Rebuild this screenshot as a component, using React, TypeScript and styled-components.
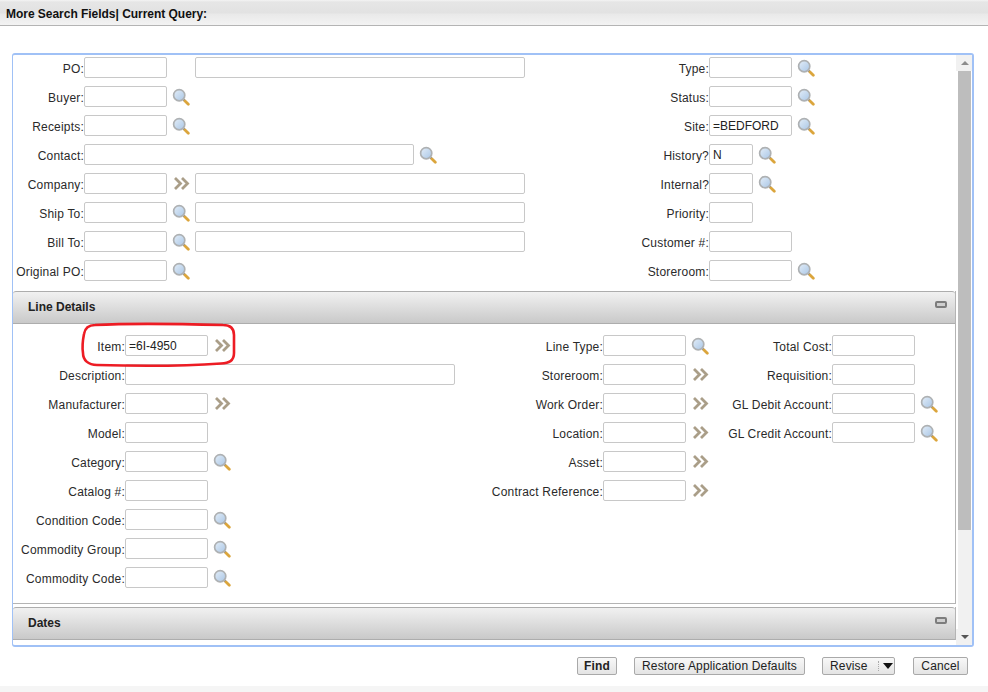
import React, { useId } from "react";
import styled, { createGlobalStyle } from "styled-components";

const Global = createGlobalStyle`
  html, body { margin: 0; padding: 0; background: #fff; }
  body { font-family: "Liberation Sans", Arial, sans-serif; font-size: 12px; color: #222; overflow: hidden; }
`;

const Page = styled.div`
  width: 988px; height: 692px; display: flex; flex-direction: column; background: #fff; overflow: hidden;
`;
const TitleBar = styled.div`
  height: 26px; flex: none; box-sizing: border-box; padding: 8px 0 0 6px;
  border-bottom: 1px solid #b4b4b4;
  background: linear-gradient(#f4f4f4 0, #e6e6e6 2px, #e2e2e2 13px, #e9e9e9 14px, #f3f3f3 25px);
  font-size: 12px; font-weight: bold; color: #111; line-height: 12px; white-space: pre; letter-spacing: -0.03px;
`;
const Frame = styled.div`
  margin: 27px 0 0 12px; width: 962px; height: 594px; flex: none; box-sizing: border-box;
  border: 1px solid #a0c1f6; border-width: 2px 2px 2px 1px; border-radius: 3px;
  display: flex; overflow: hidden;
`;
const Scroller = styled.div`
  width: 943px; flex: none; overflow: hidden; box-sizing: border-box;
`;
const TopFields = styled.div`
  display: grid; grid-template-columns: 607px 1fr; padding-top: 2px;
`;
const Col = styled.div`
  display: flex; flex-direction: column; gap: 8px;
`;
const Row = styled.div`
  display: flex; align-items: flex-start; height: 21px;
`;
const Label = styled.label<{ $w: number }>`
  width: ${(p) => p.$w}px; flex: none; box-sizing: border-box; padding: 2px 0 0 0; text-align: right;
  font-size: 12px; color: #2a2a2a; white-space: nowrap; line-height: 21px; letter-spacing: 0.2px;
  height: 21px;
`;
const Input = styled.div<{ $w: number }>`
  width: ${(p) => p.$w}px; height: 21px; flex: none; box-sizing: border-box;
  border: 1px solid #c8c8c8; border-radius: 2px; background: #fff;
  padding-left: 3px; font-size: 12px; line-height: 20px; color: #222;
`;
const Slot = styled.span<{ $w?: number }>`
  flex: none; width: ${(p) => p.$w ?? 28}px; box-sizing: border-box; padding-left: 5px; height: 21px;
  display: flex; align-items: center;
`;
const Section = styled.section`
  position: relative; box-sizing: border-box; border-right: 1px solid #b4b4b4;
`;
const SectionHeader = styled.header`
  height: 33px; box-sizing: border-box; display: flex; align-items: center; justify-content: space-between;
  padding: 0 8px 2px 15px; border: solid #adadad; border-width: 1px 0 1px 0; border-top-right-radius: 3px; border-top-left-radius: 3px;
  background: linear-gradient(#f1f1f1, #c9c9c9);
  font-weight: bold; font-size: 12px; color: #222;
`;
const Collapse = styled.span`
  width: 12px; height: 7px; box-sizing: border-box; border: 2px solid #7d7d7d; border-radius: 2px; background: #cfcfcf;
  margin-bottom: 5px;
`;
const LineBody = styled.div`
  position: relative; display: grid; grid-template-columns: 447px 255px 1fr;
  padding: 11px 0 15px; border-bottom: 1px solid #b4b4b4;
`;
const Callout = styled.svg`
  position: absolute; left: 68px; top: -1px; overflow: visible;
`;
const DatesSection = styled(Section)`
  margin-top: 3px;
`;
const SectionsWrap = styled.div`
  margin-top: 10px;
`;
const Scrollbar = styled.div`
  width: 16px; flex: none; display: flex; flex-direction: column; background: #fff; box-sizing: border-box;
`;
const ScrollButton = styled.div`
  height: 16px; flex: none; display: flex; align-items: center; justify-content: center; background: #f1f1f1; padding-left: 2px;
`;
const Thumb = styled.div`
  height: 459px; flex: none; background: #bdbdbd; margin: 0 1px 0 2px;
`;
const Track = styled.div`
  flex: 1; background: #f1f1f1; margin-left: 2px;
`;
const Arrow = styled.span<{ $up?: boolean; $c: string }>`
  width: 0; height: 0; border-left: 4px solid transparent; border-right: 4px solid transparent;
  ${(p) => (p.$up ? `border-bottom: 4px solid ${p.$c};` : `border-top: 4px solid ${p.$c};`)}
`;
const Footer = styled.div`
  display: flex; justify-content: flex-end; padding: 10px 20px 0 0; gap: 17px; height: 29px; flex: none; box-sizing: content-box;
`;
const Button = styled.button<{ $w: number; $bold?: boolean; $lead?: number }>`
  width: ${(p) => p.$w}px; height: 18px; box-sizing: border-box; padding: 0; margin: 0 0 0 ${(p) => p.$lead ?? 0}px;
  border: 1px solid #a9a9a9; border-radius: 2px; background: linear-gradient(#f8f8f8, #e4e4e4);
  font: ${(p) => (p.$bold ? "bold" : "normal")} 12px "Liberation Sans", Arial, sans-serif; color: #222;
  display: flex; align-items: center; justify-content: center; letter-spacing: 0.15px;
`;
const MenuButton = styled(Button)`
  justify-content: flex-start; padding-left: 7px; position: relative;
`;
const MenuSeparator = styled.span`
  margin-left: 10px; height: 10px; border-left: 1px dotted #aaa;
`;
const MenuCaret = styled.span`
  margin-left: 4px; width: 0; height: 0; border-left: 5px solid transparent; border-right: 5px solid transparent; border-top: 6px solid #111;
`;
const BottomStrip = styled.div`
  flex: 1; background: #f5f5f5;
`;

const Magnifier = () => {
  const id = useId();
  return (
    <svg width="18" height="18" viewBox="0 0 18 18">
      <defs>
        <linearGradient id={id} x1="0" y1="0" x2="1" y2="1">
          <stop offset="0" stopColor="#e4eef8" />
          <stop offset="1" stopColor="#a9c6e6" />
        </linearGradient>
      </defs>
      <path d="M11.5 11.5 L13 13" stroke="#8f8f8f" strokeWidth="2.4" />
      <path d="M13 13 L16.3 16.3" stroke="#dba53c" strokeWidth="2.8" strokeLinecap="round" />
      <circle cx="7.2" cy="7.2" r="5.6" fill={`url(#${id})`} stroke="#aeb1b3" strokeWidth="1.7" />
    </svg>
  );
};
const Chevrons = () => (
  <svg width="18" height="13" viewBox="0 0 18 13" style={{ marginLeft: 1 }}>
    <path d="M2 1 L7.5 6.5 L2 12 M9 1 L14.5 6.5 L9 12" fill="none" stroke="#aa9e88" strokeWidth="2.8" />
  </svg>
);

type Field = {
  label: string;
  w?: number;
  value?: string;
  icon?: "search" | "more";
  after?: number;
};

const FieldRow = ({ f, lw }: { f: Field; lw: number }) => (
  <Row>
    <Label $w={lw}>{f.label}</Label>
    <Input $w={f.w ?? 83}>{f.value}</Input>
    {(f.icon || f.after) && (
      <Slot>
        {f.icon === "search" && <Magnifier />}
        {f.icon === "more" && <Chevrons />}
      </Slot>
    )}
    {f.after && <Input $w={f.after} />}
  </Row>
);

const topLeft: Field[] = [
  { label: "PO:", after: 330 },
  { label: "Buyer:", icon: "search" },
  { label: "Receipts:", icon: "search" },
  { label: "Contact:", w: 330, icon: "search" },
  { label: "Company:", icon: "more", after: 330 },
  { label: "Ship To:", icon: "search", after: 330 },
  { label: "Bill To:", icon: "search", after: 330 },
  { label: "Original PO:", icon: "search" },
];
const topRight: Field[] = [
  { label: "Type:", icon: "search" },
  { label: "Status:", icon: "search" },
  { label: "Site:", value: "=BEDFORD", icon: "search" },
  { label: "History?", w: 44, value: "N", icon: "search" },
  { label: "Internal?", w: 44, icon: "search" },
  { label: "Priority:", w: 44 },
  { label: "Customer #:" },
  { label: "Storeroom:", icon: "search" },
];
const line1: Field[] = [
  { label: "Item:", value: "=6I-4950", icon: "more" },
  { label: "Description:", w: 330 },
  { label: "Manufacturer:", icon: "more" },
  { label: "Model:" },
  { label: "Category:", icon: "search" },
  { label: "Catalog #:" },
  { label: "Condition Code:", icon: "search" },
  { label: "Commodity Group:", icon: "search" },
  { label: "Commodity Code:", icon: "search" },
];
const line2: Field[] = [
  { label: "Line Type:", icon: "search" },
  { label: "Storeroom:", icon: "more" },
  { label: "Work Order:", icon: "more" },
  { label: "Location:", icon: "more" },
  { label: "Asset:", icon: "more" },
  { label: "Contract Reference:", icon: "more" },
];
const line3: Field[] = [
  { label: "Total Cost:" },
  { label: "Requisition:" },
  { label: "GL Debit Account:", icon: "search" },
  { label: "GL Credit Account:", icon: "search" },
];

export default function App() {
  return (
    <Page>
      <Global />
      <TitleBar>More Search Fields| Current Query:</TitleBar>
      <Frame>
        <Scroller>
          <TopFields>
            <Col>{topLeft.map((f) => <FieldRow key={f.label} f={f} lw={71} />)}</Col>
            <Col>{topRight.map((f) => <FieldRow key={f.label} f={f} lw={89} />)}</Col>
          </TopFields>
          <SectionsWrap>
            <Section>
              <SectionHeader>Line Details<Collapse /></SectionHeader>
              <LineBody>
                <Col>{line1.map((f) => <FieldRow key={f.label} f={f} lw={112} />)}</Col>
                <Col>{line2.map((f) => <FieldRow key={f.label} f={f} lw={143} />)}</Col>
                <Col>{line3.map((f) => <FieldRow key={f.label} f={f} lw={117} />)}</Col>
                <Callout width="154" height="44" viewBox="0 0 154 44">
                  <path
                    d="M14 2 C50 0 105 1 142 2 C150 2 153 6 153 12 L153 30 C153 38 148 40 140 40.5 C105 43 50 43 16 42 C7 42 2 37 2 30 C1 24 2 16 3 11 C4 5 8 2 14 2 Z"
                    fill="none" stroke="#ed1c24" strokeWidth="2.6"
                  />
                </Callout>
              </LineBody>
            </Section>
            <DatesSection>
              <SectionHeader>Dates<Collapse /></SectionHeader>
            </DatesSection>
          </SectionsWrap>
        </Scroller>
        <Scrollbar>
          <ScrollButton><Arrow $up $c="#8c8c8c" /></ScrollButton>
          <Thumb />
          <Track />
          <ScrollButton><Arrow $c="#555" /></ScrollButton>
        </Scrollbar>
      </Frame>
      <Footer>
        <Button $w={40} $bold>Find</Button>
        <Button $w={171}>Restore Application Defaults</Button>
        <MenuButton $w={73}>Revise<MenuSeparator /><MenuCaret /></MenuButton>
        <Button $w={55} $lead={1}>Cancel</Button>
      </Footer>
      <BottomStrip />
    </Page>
  );
}
